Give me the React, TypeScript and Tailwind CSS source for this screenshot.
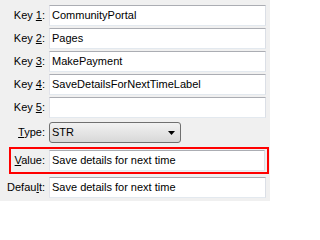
import React from "react";

const inputCls =
  "h-[21px] bg-white border border-t-[#abadb3] border-l-[#e2e3ea] border-r-[#dbdfe6] border-b-[#e3e9ef] pl-[2px] flex items-center text-[11px] text-black whitespace-nowrap overflow-hidden";

function Label({ pre, u, post, w = "w-[45px]" }: { pre: string; u: string; post: string; w?: string }) {
  return (
    <div className={`${w} shrink-0 text-right text-[11px] text-black whitespace-nowrap`}>
      {pre}
      <span className="underline underline-offset-[1px]">{u}</span>
      {post}
    </div>
  );
}

function Row({ pre, u, post, value }: { pre: string; u: string; post: string; value: string }) {
  return (
    <div className="flex items-center h-[21px]">
      <Label pre={pre} u={u} post={post} />
      <div className={`${inputCls} ml-[4px] w-[217px]`}>{value}</div>
    </div>
  );
}

export default function App() {
  const keys = [
    { n: "1", v: "CommunityPortal" },
    { n: "2", v: "Pages" },
    { n: "3", v: "MakePayment" },
    { n: "4", v: "SaveDetailsForNextTimeLabel" },
    { n: "5", v: "" },
  ];

  return (
    <div
      className="w-[270px] h-[201px] bg-[#f0f0f0] pt-[5px] overflow-hidden"
      style={{ fontFamily: '"Liberation Sans", Arial, sans-serif' }}
    >
      <div className="flex flex-col gap-[2px]">
        {keys.map((k) => (
          <Row key={k.n} pre="Key " u={k.n} post=":" value={k.v} />
        ))}
      </div>

      <div className="flex items-center h-[21px] mt-[4px]">
        <Label pre="" u="T" post="ype:" />
        <div className="ml-[4px] w-[132px] h-[21px] rounded-[3px] border border-[#707070] bg-gradient-to-b from-[#f2f2f2] to-[#d8d8d8] flex items-center justify-between pl-[2px] pr-[5px]">
          <span className="text-[11px] text-black">STR</span>
          <svg width="7" height="4" viewBox="0 0 7 4">
            <path d="M0 0 H7 L3.5 4 Z" fill="#000" />
          </svg>
        </div>
      </div>

      <div className="ml-[9px] mt-[4px] w-[260px] h-[27px] border-2 border-[#ff0000] flex items-center">
        <Label pre="" u="V" post="alue:" w="w-[34px]" />
        <div className={`${inputCls} ml-[4px] w-[216px]`}>Save details for next time</div>
      </div>

      <div className="flex items-center h-[21px] mt-[3px]">
        <Label pre="Defau" u="l" post="t:" />
        <div className={`${inputCls} ml-[4px] w-[217px]`}>Save details for next time</div>
      </div>
    </div>
  );
}
